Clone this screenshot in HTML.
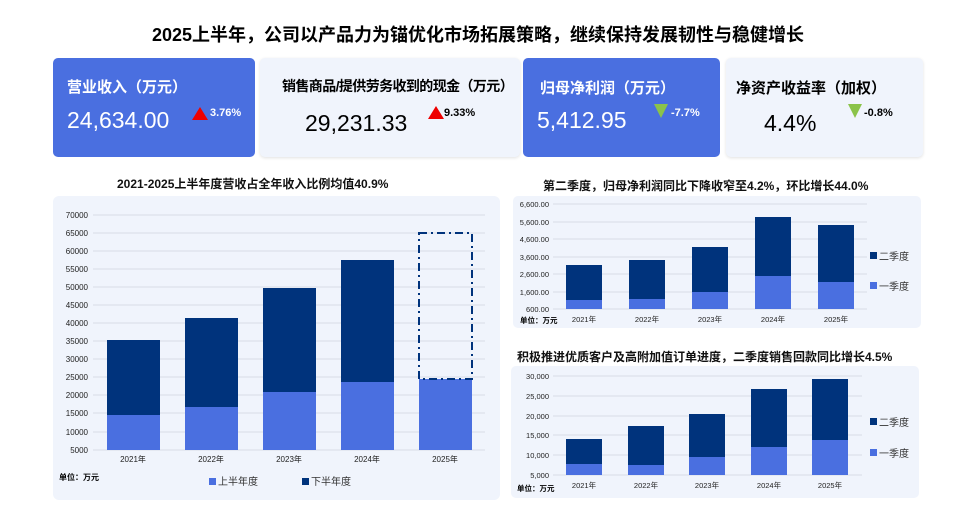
<!DOCTYPE html>
<html><head><meta charset="utf-8"><style>
*{margin:0;padding:0;box-sizing:border-box}
body{width:978px;height:529px;background:#fff;position:relative;overflow:hidden;font-family:"Liberation Sans","Noto Sans CJK SC",sans-serif}
.a{position:absolute;white-space:nowrap}
.card{position:absolute;border-radius:5px;top:58px;height:99px}
.blue{background:#4a6fe0;color:#fff}
.light{background:#f0f4fc;color:#000;box-shadow:0 1px 3px rgba(0,0,0,.12)}
.lab{font-size:15px;font-weight:bold}
.num{font-size:23px}
.pct{font-size:11px;font-weight:bold}
.tt{font-size:12px;font-weight:bold;color:#111}
</style></head><body>
<div class="a" style="left:-11px;width:978px;text-align:center;top:21px;font-size:18px;font-weight:bold">2025上半年，公司以产品力为锚优化市场拓展策略，继续保持发展韧性与稳健增长</div>

<div class="card blue" style="left:53px;width:202px"></div>
<div class="a lab" style="left:67px;top:76px;color:#fff">营业收入（万元）</div>
<div class="a num" style="left:67px;top:107px;color:#fff">24,634.00</div>
<svg class="a" style="left:192px;top:107px" width="16" height="13"><polygon points="8,0 16,13 0,13" fill="#e00"/></svg>
<div class="a pct" style="left:210px;top:107px;color:#fff">3.76%</div>

<div class="card light" style="left:260px;width:260px"></div>
<div class="a lab" style="left:282px;top:76px;font-size:14px;letter-spacing:-0.6px">销售商品/提供劳务收到的现金（万元）</div>
<div class="a num" style="left:305px;top:110px">29,231.33</div>
<svg class="a" style="left:428px;top:106px" width="16" height="13"><polygon points="8,0 16,13 0,13" fill="#e00"/></svg>
<div class="a pct" style="left:444px;top:107px">9.33%</div>

<div class="card blue" style="left:523px;width:197px"></div>
<div class="a lab" style="left:540px;top:77px;color:#fff">归母净利润（万元）</div>
<div class="a num" style="left:537px;top:107px;color:#fff">5,412.95</div>
<svg class="a" style="left:654px;top:104px" width="14" height="14"><polygon points="0,0 14,0 7,14" fill="#8bc34a"/></svg>
<div class="a pct" style="left:671px;top:107px;color:#fff">-7.7%</div>

<div class="card light" style="left:726px;width:197px"></div>
<div class="a lab" style="left:736px;top:77px">净资产收益率（加权）</div>
<div class="a num" style="left:764px;top:110px">4.4%</div>
<svg class="a" style="left:848px;top:104px" width="14" height="14"><polygon points="0,0 14,0 7,14" fill="#8bc34a"/></svg>
<div class="a pct" style="left:864px;top:107px">-0.8%</div>

<div class="a tt" style="left:117px;top:175px">2021-2025上半年度营收占全年收入比例均值40.9%</div>
<div class="a tt" style="left:543px;top:177px">第二季度，归母净利润同比下降收窄至4.2%，环比增长44.0%</div>
<div class="a tt" style="left:517px;top:348px">积极推进优质客户及高附加值订单进度，二季度销售回款同比增长4.5%</div>

<svg class="a" style="left:0;top:0" width="978" height="529" font-family="Liberation Sans, Noto Sans CJK SC, sans-serif">
<rect x="53" y="196" width="447" height="304" rx="6" fill="#f0f4fc"/>
<g stroke="#d8dce6" stroke-width="1">
<line x1="93" x2="485" y1="215" y2="215"/><line x1="93" x2="485" y1="233" y2="233"/><line x1="93" x2="485" y1="251" y2="251"/><line x1="93" x2="485" y1="269" y2="269"/><line x1="93" x2="485" y1="287" y2="287"/><line x1="93" x2="485" y1="305" y2="305"/><line x1="93" x2="485" y1="323" y2="323"/><line x1="93" x2="485" y1="341" y2="341"/><line x1="93" x2="485" y1="359" y2="359"/><line x1="93" x2="485" y1="377" y2="377"/><line x1="93" x2="485" y1="395" y2="395"/><line x1="93" x2="485" y1="413" y2="413"/><line x1="93" x2="485" y1="432" y2="432"/><line x1="93" x2="485" y1="450" y2="450"/>
</g>
<g font-size="8" fill="#222" text-anchor="end">
<text x="88" y="218">70000</text><text x="88" y="236">65000</text><text x="88" y="254">60000</text><text x="88" y="272">55000</text><text x="88" y="290">50000</text><text x="88" y="308">45000</text><text x="88" y="326">40000</text><text x="88" y="344">35000</text><text x="88" y="362">30000</text><text x="88" y="380">25000</text><text x="88" y="398">20000</text><text x="88" y="416">15000</text><text x="88" y="435">10000</text><text x="88" y="453">5000</text>
</g>
<g fill="#00337c">
<rect x="107" y="340" width="53" height="75"/><rect x="185" y="318" width="53" height="89"/><rect x="263" y="288" width="53" height="104"/><rect x="341" y="260" width="53" height="122"/>
</g>
<g fill="#4a6fe0">
<rect x="107" y="415" width="53" height="35"/><rect x="185" y="407" width="53" height="43"/><rect x="263" y="392" width="53" height="58"/><rect x="341" y="382" width="53" height="68"/><rect x="419" y="379" width="53" height="71"/>
</g>
<rect x="419" y="233" width="53" height="146" fill="none" stroke="#00337c" stroke-width="2" stroke-dasharray="8,4,2,4"/>
<g font-size="8" fill="#222" text-anchor="middle">
<text x="133" y="462">2021年</text><text x="211" y="462">2022年</text><text x="289" y="462">2023年</text><text x="367" y="462">2024年</text><text x="445" y="462">2025年</text>
</g>
<text x="59" y="480" font-size="8" font-weight="bold">单位：万元</text>
<rect x="209" y="478" width="7" height="7" fill="#4a6fe0"/><text x="218" y="485" font-size="10" fill="#333">上半年度</text>
<rect x="302" y="478" width="7" height="7" fill="#00337c"/><text x="311" y="485" font-size="10" fill="#333">下半年度</text>

<rect x="513" y="196" width="408" height="132" rx="5" fill="#f0f4fc"/>
<g stroke="#d8dce6"><line x1="553" x2="867" y1="204" y2="204"/><line x1="553" x2="867" y1="222" y2="222"/><line x1="553" x2="867" y1="239" y2="239"/><line x1="553" x2="867" y1="257" y2="257"/><line x1="553" x2="867" y1="274" y2="274"/><line x1="553" x2="867" y1="292" y2="292"/><line x1="553" x2="867" y1="309" y2="309"/></g>
<g font-size="7.5" fill="#222" text-anchor="end"><text x="549" y="207">6,600.00</text><text x="549" y="225">5,600.00</text><text x="549" y="242">4,600.00</text><text x="549" y="260">3,600.00</text><text x="549" y="277">2,600.00</text><text x="549" y="295">1,600.00</text><text x="549" y="312">600.00</text></g>
<g fill="#00337c"><rect x="566" y="265" width="36" height="35"/><rect x="629" y="260" width="36" height="39"/><rect x="692" y="247" width="36" height="45"/><rect x="755" y="217" width="36" height="59"/><rect x="818" y="225" width="36" height="57"/></g>
<g fill="#4a6fe0"><rect x="566" y="300" width="36" height="9"/><rect x="629" y="299" width="36" height="10"/><rect x="692" y="292" width="36" height="17"/><rect x="755" y="276" width="36" height="33"/><rect x="818" y="282" width="36" height="27"/></g>
<g font-size="7.5" fill="#222" text-anchor="middle"><text x="584" y="322">2021年</text><text x="647" y="322">2022年</text><text x="710" y="322">2023年</text><text x="773" y="322">2024年</text><text x="836" y="322">2025年</text></g>
<text x="520" y="323" font-size="7.5" font-weight="bold">单位：万元</text>
<rect x="870" y="252" width="7" height="7" fill="#00337c"/><text x="879" y="260" font-size="10" fill="#333">二季度</text>
<rect x="870" y="282" width="7" height="7" fill="#4a6fe0"/><text x="879" y="290" font-size="10" fill="#333">一季度</text>

<rect x="511" y="366" width="408" height="132" rx="5" fill="#f0f4fc"/>
<g stroke="#d8dce6"><line x1="553" x2="862" y1="376" y2="376"/><line x1="553" x2="862" y1="396" y2="396"/><line x1="553" x2="862" y1="416" y2="416"/><line x1="553" x2="862" y1="435" y2="435"/><line x1="553" x2="862" y1="455" y2="455"/><line x1="553" x2="862" y1="475" y2="475"/></g>
<g font-size="7.5" fill="#222" text-anchor="end"><text x="549" y="379">30,000</text><text x="549" y="399">25,000</text><text x="549" y="419">20,000</text><text x="549" y="438">15,000</text><text x="549" y="458">10,000</text><text x="549" y="478">5,000</text></g>
<g fill="#00337c"><rect x="566" y="439" width="36" height="25"/><rect x="628" y="426" width="36" height="39"/><rect x="689" y="414" width="36" height="43"/><rect x="751" y="389" width="36" height="58"/><rect x="812" y="379" width="36" height="61"/></g>
<g fill="#4a6fe0"><rect x="566" y="464" width="36" height="11"/><rect x="628" y="465" width="36" height="10"/><rect x="689" y="457" width="36" height="18"/><rect x="751" y="447" width="36" height="28"/><rect x="812" y="440" width="36" height="35"/></g>
<g font-size="7.5" fill="#222" text-anchor="middle"><text x="584" y="488">2021年</text><text x="646" y="488">2022年</text><text x="707" y="488">2023年</text><text x="769" y="488">2024年</text><text x="830" y="488">2025年</text></g>
<text x="517" y="491" font-size="7.5" font-weight="bold">单位：万元</text>
<rect x="870" y="418" width="7" height="7" fill="#00337c"/><text x="879" y="426" font-size="10" fill="#333">二季度</text>
<rect x="870" y="449" width="7" height="7" fill="#4a6fe0"/><text x="879" y="457" font-size="10" fill="#333">一季度</text>
</svg>
</body></html>
